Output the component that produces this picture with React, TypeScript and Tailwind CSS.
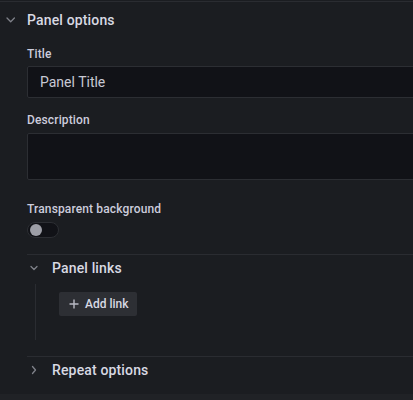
import React from "react";

const Down = ({ big }: { big?: boolean }) => (
  <svg width="10" height="10" viewBox="0 0 10 10" className="shrink-0">
    <path
      d={big ? "M1 3 L4.7 6.7 L8.4 3" : "M2 3.5 L5 6.5 L8 3.5"}
      fill="none"
      stroke="#7f8189"
      strokeWidth="1.3"
      strokeLinecap="round"
      strokeLinejoin="round"
    />
  </svg>
);

const Right = () => (
  <svg width="10" height="10" viewBox="0 0 10 10" className="shrink-0">
    <path
      d="M3.5 1.5 L6.5 5 L3.5 8.5"
      fill="none"
      stroke="#7f8189"
      strokeWidth="1.3"
      strokeLinecap="round"
      strokeLinejoin="round"
    />
  </svg>
);

export default function App() {
  return (
    <div className="w-[413px] h-[400px] overflow-hidden bg-[#1b1d21] font-['Roboto',sans-serif] text-[#ccccdc]">
      <div className="w-[440px] h-[400px] flex flex-col">
        <div className="h-[1px] shrink-0" />
        <div className="border-t border-[#2a2c31] flex-1 flex flex-col">
          {/* Panel options header */}
          <div className="h-[36px] flex items-center">
            <span className="ml-[6px]">
              <Down big />
            </span>
            <span className="ml-[11px] text-[14px] leading-[20px] font-medium tracking-[0.15px] text-[#d8d9e3]">
              Panel options
            </span>
          </div>

          <div className="pl-[27px] pt-[8px] flex flex-col">
            <label className="text-[12px] leading-[16px] font-medium tracking-[0.14px] mb-[4px]">Title</label>
            <div className="h-[32px] bg-[#111217] border border-[#2c2e33] rounded-[2px] flex items-center pl-[12px] text-[14px] text-[#c8c9d4]">
              Panel Title
            </div>

            <label className="mt-[14px] text-[12px] leading-[16px] font-medium tracking-[0.14px] mb-[5px]">
              Description
            </label>
            <div className="h-[47px] bg-[#111217] border border-[#2c2e33] rounded-[2px]" />

            <label className="mt-[21px] text-[12px] leading-[16px] font-medium tracking-[0.14px] mb-[5px]">
              Transparent background
            </label>
            <div className="w-[32px] h-[16px] rounded-full bg-[#111217] border border-[#2c2e33] flex items-center pl-[2px]">
              <div className="w-[12px] h-[12px] rounded-full bg-[#9d9ea6]" />
            </div>

            {/* Panel links */}
            <div className="mt-[16px] border-t border-[#2a2c31]">
              <div className="h-[26px] flex items-center">
                <span className="ml-[2px]">
                  <Down />
                </span>
                <span className="ml-[13px] text-[14px] leading-[20px] font-medium tracking-[0.15px] text-[#d8d9e3]">
                  Panel links
                </span>
              </div>
              <div className="ml-[8px] mt-[3px] border-l border-[#2a2c31] pl-[23px] pt-[8px] pb-[24px]">
                <button className="h-[24px] bg-[#2d2f34] rounded-[2px] flex items-center pl-[10px] pr-[8px] text-[12px] font-medium text-[#d8d9e3]">
                  <svg width="10" height="10" viewBox="0 0 10 10" className="shrink-0">
                    <path d="M5 0.5 V9.5 M0.5 5 H9.5" stroke="#b9bac4" strokeWidth="1.4" />
                  </svg>
                  <span className="ml-[6px]">Add link</span>
                </button>
              </div>
            </div>

            {/* Repeat options */}
            <div className="mt-[16px] border-t border-[#2a2c31]">
              <div className="h-[26px] flex items-center">
                <span className="ml-[2px]">
                  <Right />
                </span>
                <span className="ml-[13px] text-[14px] leading-[20px] font-medium tracking-[0.15px] text-[#d8d9e3]">
                  Repeat options
                </span>
              </div>
            </div>
          </div>

          <div className="mt-auto h-[6px] bg-[#202226] shrink-0" />
        </div>
      </div>
    </div>
  );
}
